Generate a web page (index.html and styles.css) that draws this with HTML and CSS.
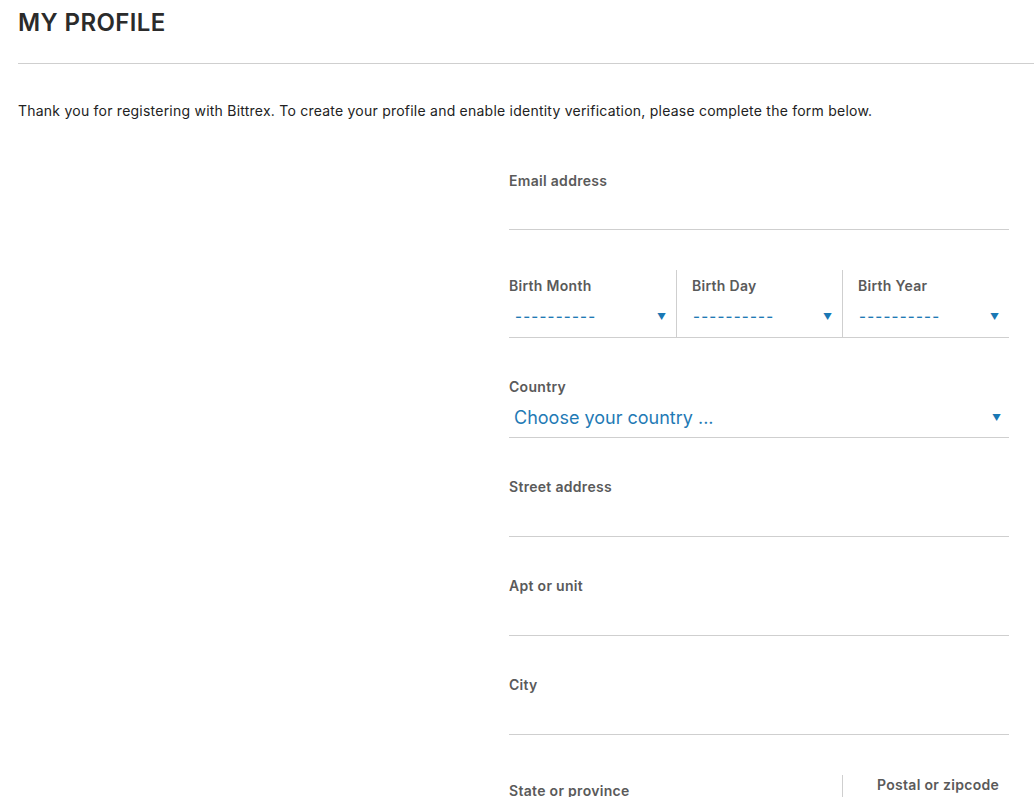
FILE: index.html
```html
<!DOCTYPE html>
<html>
<head>
<meta charset="utf-8">
<link rel="stylesheet" href="styles.css">
</head>
<body>
<div class="page">
  <h1 class="title">MY PROFILE</h1>
  <hr class="rule">
  <p class="intro">Thank you for registering with Bittrex. To create your profile and enable identity verification, please complete the form below.</p>
  <form class="form">
    <div class="field">
      <label class="label">Email address</label>
      <div class="input email"></div>
    </div>
    <div class="row birth">
      <div class="cell">
        <label class="label">Birth Month</label>
        <div class="select small"><span class="dashes">----------</span><span class="arrow">&#9660;</span></div>
      </div>
      <div class="cell">
        <label class="label">Birth Day</label>
        <div class="select small"><span class="dashes">----------</span><span class="arrow">&#9660;</span></div>
      </div>
      <div class="cell">
        <label class="label">Birth Year</label>
        <div class="select small"><span class="dashes">----------</span><span class="arrow">&#9660;</span></div>
      </div>
    </div>
    <div class="field country">
      <label class="label">Country</label>
      <div class="select big"><span>Choose your country ...</span><span class="arrow">&#9660;</span></div>
    </div>
    <div class="field">
      <label class="label">Street address</label>
      <div class="input"></div>
    </div>
    <div class="field">
      <label class="label">Apt or unit</label>
      <div class="input"></div>
    </div>
    <div class="field">
      <label class="label">City</label>
      <div class="input"></div>
    </div>
    <div class="row last">
      <div class="cell state">
        <label class="label">State or province</label>
        <div class="input"></div>
      </div>
      <div class="cell postal">
        <label class="label">Postal or zipcode</label>
        <div class="input"></div>
      </div>
    </div>
  </form>
</div>
</body>
</html>
```
FILE: styles.css
```css
html, body {
  margin: 0;
  padding: 0;
  background: #fff;
}
body {
  font-family: "Inter", "Liberation Sans", sans-serif;
  color: #222;
}
.page {
  padding: 0 0 0 18px;
}
.title {
  margin: 0;
  padding-top: 9px;
  font-size: 24px;
  line-height: 28px;
  font-weight: 600;
  letter-spacing: 0.4px;
  color: #2b2b2b;
}
.rule {
  margin: 26px 0 0 0;
  border: 0;
  border-top: 1px solid #cfcfcf;
  height: 0;
}
.intro {
  margin: 37px 0 0 0;
  font-size: 14px;
  line-height: 20px;
  letter-spacing: 0.23px;
  color: #222;
}
.form {
  margin-left: 491px;
  width: 500px;
  padding-top: 50px;
}
.field {
  border-bottom: 1px solid #cfcfcf;
}
.field + .field {
  margin-top: 39px;
}
.label {
  display: block;
  font-size: 14px;
  line-height: 20px;
  font-weight: 600;
  letter-spacing: 0.3px;
  color: #5a5a5a;
}
.input {
  height: 39px;
}
.input.email {
  height: 38px;
}
.row {
  display: grid;
  grid-template-columns: 167px 166px 167px;
}
.birth {
  margin-top: 40px;
  border-bottom: 1px solid #cfcfcf;
}
.cell {
  padding-top: 6px;
}
.birth .cell + .cell {
  border-left: 1px solid #cfcfcf;
  padding-left: 15px;
}
.select {
  display: flex;
  justify-content: space-between;
  align-items: center;
  color: #1f7ab5;
}
.select.small {
  height: 41px;
  padding: 0 10px 0 6px;
}
.dashes {
  font-size: 15px;
  font-weight: 500;
  letter-spacing: 1.2px;
  color: #1f7ab5;
}
.birth .cell + .cell .select.small {
  padding-left: 1px;
}
.arrow {
  font-size: 9px;
  letter-spacing: 0;
  color: #1a78b4;
}
.country {
  margin-top: 39px;
}
.select.big {
  height: 40px;
  padding: 0 8px 0 5px;
  font-size: 18px;
}
.last {
  margin-top: 40px;
  grid-template-columns: 333px 167px;
}
.last .cell.state {
  padding-top: 6px;
}
.last .cell.postal {
  border-left: 1px solid #cfcfcf;
  padding-left: 34px;
  padding-top: 0;
}
```
